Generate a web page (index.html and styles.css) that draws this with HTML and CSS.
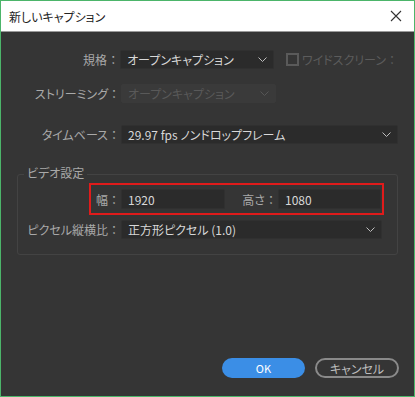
FILE: index.html
```html
<!DOCTYPE html>
<html lang="ja">
<head>
  <meta charset="UTF-8">
  <title>新しいキャプション</title>
  <link rel="stylesheet" href="styles.css">
</head>
<body>
  <div class="window">
    <div class="titlebar">
      <span class="title">新しいキャプション</span>
      <svg class="close" width="12" height="12" viewBox="0 0 12 12">
        <path d="M1 1 L11 11 M11 1 L1 11" stroke="#333" stroke-width="1.1" fill="none"/>
      </svg>
    </div>

    <div class="content">
      <div class="row first">
        <label class="lbl">規格<span class="colon">：</span></label>
        <div class="select short">
          <span>オープンキャプション</span>
          <svg class="chev" width="9" height="5" viewBox="0 0 9 5"><path d="M0.5 0.5 L4.5 4.5 L8.5 0.5" stroke="#bdbdbd" fill="none"/></svg>
        </div>
        <div class="check">
          <span class="box"></span>
          <span class="check-lbl">ワイドスクリーン<span class="colon">：</span></span>
        </div>
      </div>

      <div class="row second">
        <label class="lbl">ストリーミング<span class="colon">：</span></label>
        <div class="select short disabled">
          <span>オープンキャプション</span>
          <svg class="chev" width="9" height="5" viewBox="0 0 9 5"><path d="M0.5 0.5 L4.5 4.5 L8.5 0.5" stroke="#555" fill="none"/></svg>
        </div>
      </div>

      <div class="row third">
        <label class="lbl">タイムベース<span class="colon">：</span></label>
        <div class="select wide">
          <span class="latin">29.97 fps ノンドロップフレーム</span>
          <svg class="chev" width="9" height="5" viewBox="0 0 9 5"><path d="M0.5 0.5 L4.5 4.5 L8.5 0.5" stroke="#bdbdbd" fill="none"/></svg>
        </div>
      </div>

      <div class="group">
        <span class="legend">ビデオ設定</span>
        <div class="size-row">
          <label class="lbl small">幅<span class="colon">：</span></label>
          <div class="input w">1920</div>
          <label class="lbl height">高さ<span class="colon">：</span></label>
          <div class="input h">1080</div>
        </div>
        <div class="row pixel">
          <label class="lbl inner">ピクセル縦横比<span class="colon">：</span></label>
          <div class="select wide">
            <span>正方形ピクセル (1.0)</span>
            <svg class="chev" width="9" height="5" viewBox="0 0 9 5"><path d="M0.5 0.5 L4.5 4.5 L8.5 0.5" stroke="#bdbdbd" fill="none"/></svg>
          </div>
        </div>
      </div>

      <div class="buttons">
        <button class="ok">OK</button>
        <button class="cancel">キャンセル</button>
      </div>
    </div>
  </div>
</body>
</html>
```

FILE: styles.css
```css
* {
  margin: 0;
  padding: 0;
  box-sizing: border-box;
}

body {
  width: 415px;
  height: 397px;
  overflow: hidden;
  font-family: "Noto Sans CJK JP", "Noto Sans", sans-serif;
  font-feature-settings: "palt";
  font-size: 12px;
}

.window {
  width: 415px;
  height: 397px;
  border: 1px solid #4cb56a;
  display: flex;
  flex-direction: column;
  background: #353535;
}

.titlebar {
  height: 31px;
  background: #fff;
  border-bottom: 1px solid #9a9a9a;
  display: flex;
  align-items: center;
  justify-content: space-between;
  padding: 0 12px 0 8px;
}

.title {
  color: #222;
  font-size: 12px;
}

.content {
  flex: 1;
  display: flex;
  flex-direction: column;
  padding: 18px 16px 18px 16px;
}

.row {
  display: flex;
  align-items: center;
  height: 19px;
}

.second {
  margin-top: 15px;
}

.third {
  margin-top: 22px;
}

.lbl {
  width: 104px;
  padding-right: 1px;
  text-align: right;
  color: #a9a9a9;
  white-space: nowrap;
}

.colon {
  font-feature-settings: normal;
}

.lbl.inner {
  width: 103px;
}

.select {
  height: 19px;
  background: #2b2b2b;
  border: 1px solid #303030;
  border-radius: 2px;
  color: #d8d8d8;
  display: flex;
  align-items: center;
  justify-content: space-between;
  padding: 0 6px 0 6px;
}

.select.short {
  width: 155px;
}

.select.wide {
  flex: 1;
}

.select.disabled {
  background: #3a3a3a;
  border-color: #3a3a3a;
  color: #595959;
}

.chev {
  flex: none;
}

.check {
  display: flex;
  align-items: center;
  margin-left: 12px;
}

.box {
  width: 13px;
  height: 13px;
  border: 2px solid #5a5a5a;
}

.check-lbl {
  margin-left: 3px;
  color: #5c5c5c;
  white-space: nowrap;
}

.group {
  position: relative;
  margin-top: 30px;
  border: 1px solid #434343;
  border-radius: 3px;
  padding: 8px 15px 15px 0;
}

.legend {
  position: absolute;
  top: -9px;
  left: 6px;
  padding: 0 3px;
  line-height: 14px;
  background: #353535;
  color: #a9a9a9;
}

.size-row {
  display: flex;
  align-items: center;
  margin-left: 71px;
  margin-right: -2px;
  height: 32px;
  border: 2px solid #e01b1b;
  padding: 0 1px 0 0;
}

.lbl.small {
  width: 30px;
}

.lbl.height {
  width: 53px;
}

.input {
  height: 20px;
  background: #2b2b2b;
  border: 1px solid #303030;
  border-radius: 2px;
  color: #d8d8d8;
  display: flex;
  align-items: center;
  padding-left: 6px;
}

.input.w {
  width: 104px;
}

.input.h {
  flex: 1;
}

.pixel {
  margin-top: 5px;
}

.buttons {
  margin-top: auto;
  margin-right: -1px;
  display: flex;
  justify-content: flex-end;
  gap: 10px;
}

button {
  height: 20px;
  border-radius: 10px;
  font-family: inherit;
  font-size: 11px;
  font-feature-settings: "palt";
}

button.ok {
  width: 83px;
  background: #3b8ee6;
  border: none;
  color: #fff;
}

button.cancel {
  width: 84px;
  background: transparent;
  border: 2px solid #8a8a8a;
  color: #bdbdbd;
  font-size: 12px;
}
```
